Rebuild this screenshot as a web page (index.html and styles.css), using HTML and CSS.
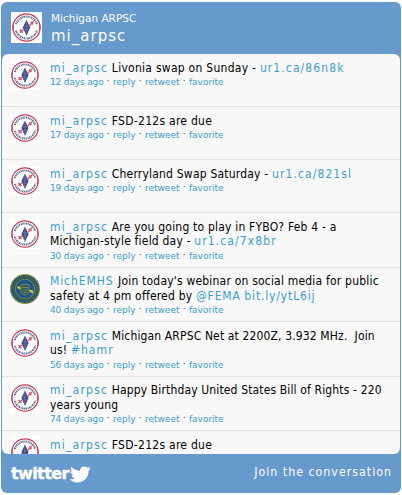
FILE: index.html
```html
<!DOCTYPE html>
<html lang="en">
<head>
<meta charset="utf-8">
<title>Michigan ARPSC</title>
<link rel="stylesheet" href="styles.css">
</head>
<body>
<svg class="defs" width="0" height="0" aria-hidden="true">
  <symbol id="arpsc" viewBox="0 0 30 30">
    <rect width="30" height="30" fill="#fff"/>
    <circle cx="15" cy="15" r="13.2" fill="none" stroke="#c43c55" stroke-width="1.2"/>
    <circle cx="15" cy="15" r="10.6" fill="none" stroke="#6b7199" stroke-width="2" stroke-dasharray="1.5 .6 1 .5"/>
    <path d="M2.800 12.200h4v5.400h-4zM23.200 12.200h4v5.400h-4z" fill="#fff"/>
    <path d="M2.200 12v6M27.800 12v6" stroke="#c43c55"/>
    <path d="M8.5 20l3.500-3M18 13l4-4M19 9.500l2.500 2.500M8.500 17l3 3" stroke="#d95068" stroke-width="1.4"/>
    <path d="M15 7.500l3.600 7.500-3.600 8-3.600-8z" fill="#434a85"/>
    <path d="M15 9v12M13 14h4M13.300 17h3.400" stroke="#8d92b8" stroke-width=".5"/>
  </symbol>
  <symbol id="emhs" viewBox="0 0 30 30">
    <circle cx="15" cy="15" r="14.800" fill="#1d4c68"/>
    <circle cx="15" cy="15" r="14.200" fill="none" stroke="#a9a832" stroke-width="1.1" stroke-dasharray="1.300 .5"/>
    <circle cx="15" cy="15" r="11.900" fill="none" stroke="#687f4d" stroke-width="1.3" stroke-dasharray="1 .9"/>
    <circle cx="15" cy="15" r="9.800" fill="#1d568a" stroke="#9a9c3c" stroke-width=".8"/>
    <path d="M6.500 12l4 1 1 2.500-3-.5zM19 15.500l4 1 .5 3-4-1.500z" fill="#d3c13d"/>
    <path d="M11 10.500h8v7q-1 3-4 3.500-3-.5-4-3.500z" fill="#325d5c" stroke="#788446"/>
    <path d="M12.500 13.500h5M13 16h4M13.500 18.500h3" stroke="#919546" stroke-width=".8"/>
  </symbol>
</svg>
<div class="widget">
  <header class="head">
    <svg class="head-avatar"><use href="#arpsc"/></svg>
    <div>
      <h3 class="title">Michigan ARPSC</h3>
      <h4 class="handle">mi_arpsc</h4>
    </div>
  </header>
  <main class="tweets">
    <article class="tweet short">
      <svg class="avatar"><use href="#arpsc"/></svg>
      <div class="body"><p class="text wide"><a class="user">mi_arpsc</a> Livonia swap on Sunday - <a class="url">ur1.ca/86n8k</a></p>
      <p class="meta"><a class="age">12 days ago</a> <i>·</i> <a>reply</a> <i>·</i> <a>retweet</a> <i>·</i> <a>favorite</a></p></div>
    </article>
    <article class="tweet short">
      <svg class="avatar"><use href="#arpsc"/></svg>
      <div class="body"><p class="text wide"><a class="user">mi_arpsc</a> FSD-212s are due</p>
      <p class="meta"><a class="age">17 days ago</a> <i>·</i> <a>reply</a> <i>·</i> <a>retweet</a> <i>·</i> <a>favorite</a></p></div>
    </article>
    <article class="tweet short">
      <svg class="avatar"><use href="#arpsc"/></svg>
      <div class="body"><p class="text"><a class="user">mi_arpsc</a> Cherryland Swap Saturday - <a class="url">ur1.ca/821sl</a></p>
      <p class="meta"><a class="age">19 days ago</a> <i>·</i> <a>reply</a> <i>·</i> <a>retweet</a> <i>·</i> <a>favorite</a></p></div>
    </article>
    <article class="tweet">
      <svg class="avatar"><use href="#arpsc"/></svg>
      <div class="body"><p class="text"><a class="user">mi_arpsc</a> Are you going to play in FYBO? Feb 4 - a<br>Michigan-style field day - <a class="url">ur1.ca/7x8br</a></p>
      <p class="meta"><a class="age">30 days ago</a> <i>·</i> <a>reply</a> <i>·</i> <a>retweet</a> <i>·</i> <a>favorite</a></p></div>
    </article>
    <article class="tweet">
      <svg class="avatar"><use href="#emhs"/></svg>
      <div class="body"><p class="text"><a class="org">MichEMHS</a> Join today's webinar on social media for public<br>safety at 4 pm offered by <a>@FEMA</a> <a>bit.ly/ytL6ij</a></p>
      <p class="meta"><a class="age">40 days ago</a> <i>·</i> <a>reply</a> <i>·</i> <a>retweet</a> <i>·</i> <a>favorite</a></p></div>
    </article>
    <article class="tweet">
      <svg class="avatar"><use href="#arpsc"/></svg>
      <div class="body"><p class="text tight"><a class="user">mi_arpsc</a> Michigan ARPSC Net at 2200Z, 3.932 MHz.&nbsp; Join<br>us! <a class="url">#hamr</a></p>
      <p class="meta"><a class="age">56 days ago</a> <i>·</i> <a>reply</a> <i>·</i> <a>retweet</a> <i>·</i> <a>favorite</a></p></div>
    </article>
    <article class="tweet">
      <svg class="avatar"><use href="#arpsc"/></svg>
      <div class="body"><p class="text tight"><a class="user">mi_arpsc</a> Happy Birthday United States Bill of Rights - 220<br>years young</p>
      <p class="meta"><a class="age">74 days ago</a> <i>·</i> <a>reply</a> <i>·</i> <a>retweet</a> <i>·</i> <a>favorite</a></p></div>
    </article>
    <article class="tweet">
      <svg class="avatar"><use href="#arpsc"/></svg>
      <div class="body"><p class="text wide"><a class="user">mi_arpsc</a> FSD-212s are due</p></div>
    </article>
  </main>
  <footer class="foot">
    <div class="logo"><span class="wordmark">twitter</span><svg class="bird" viewBox="0 0 21 17" preserveAspectRatio="none"><path d="M0 13.1c2.200.600 3.700.100 4.800-.6C2.700 12 1.800 10.700 1.500 9.500h1.700C1.400 8.500.500 7 .600 5.300l1.700.5C.700 4.300.500 2.300 1.300.700 3.500 3.200 6.300 4.500 9.500 4.700 9.400 2 11.300.400 13.500.400c1.200 0 2.200.500 3 1.300.9-.2 1.700-.5 2.500-1-.2.900-.8 1.600-1.600 2.200l2.400-.5c-.5.900-1.200 1.600-2 2.100C18 11.500 12.900 16.800 6.500 16.600 3.900 16.500 1.600 15.300 0 13.100z" fill="#fff"/></svg></div>
    <a class="join">Join the conversation</a>
  </footer>
</div>
</body>
</html>
```
FILE: styles.css
```css
* { box-sizing: border-box; }
body { margin: 0; background: #fff; font-family: "DejaVu Sans", sans-serif; }
.defs { display: block; }
h3, h4, p { margin: 0; font-weight: 400; }
.widget { width: 400px; height: 491px; margin: 2px 0 0 1px; background: #6699cc; border-radius: 6px; }
.head { display: flex; height: 52px; padding: 10px; color: #fff; }
.head-avatar { width: 31px; height: 31px; margin-right: 9px; }
.title { font-size: 10.5px; line-height: 13px; }
.handle { font-size: 15px; line-height: 22px; letter-spacing: 1px; }
.tweets { height: 400px; margin: 0 1px; background: #f8f8f8; border-radius: 6px; overflow: hidden; }
.tweet { display: flex; height: 54.5px; padding: 6px 8px 0; border-bottom: 1px dotted #d2d2d2; }
.tweet.short { height: 53px; }
.avatar { flex: none; width: 30px; height: 30px; margin-right: 10px; }
.body { padding-top: .7px; white-space: nowrap; }
.text { font-family: "DejaVu Sans Condensed", "DejaVu Sans", sans-serif; font-stretch: condensed; font-size: 12px; line-height: 14.5px; letter-spacing: .2px; color: #000; }
.text.wide { letter-spacing: .27px; }
.text.tight { letter-spacing: .14px; }
.text a { color: #3d9dce; letter-spacing: .85px; }
.text .user { letter-spacing: 1.22px; }
.text .url { letter-spacing: 1.1px; }
.text .org { margin-right: 1px; letter-spacing: .9px; }
.meta { font-size: 9px; line-height: 14.6px; color: #444; }
.meta a { color: #3d9dce; }
.meta .age { letter-spacing: -.15px; }
.meta i { position: relative; top: -1px; margin: 0 .4px; font-style: normal; }
.foot { display: flex; justify-content: space-between; padding: 9px 9px 0 10px; }
.logo { display: flex; align-items: center; height: 22px; }
.wordmark { width: 59px; color: #fff; font-size: 16px; font-weight: 700; letter-spacing: -.6px; line-height: 20px; -webkit-text-stroke: .4px #fff; }
.bird { width: 22px; height: 17px; }
.join { font-family: "DejaVu Sans Condensed", "DejaVu Sans", sans-serif; font-stretch: condensed; font-size: 12.3px; line-height: 18px; letter-spacing: 1px; color: #fff; }
```
